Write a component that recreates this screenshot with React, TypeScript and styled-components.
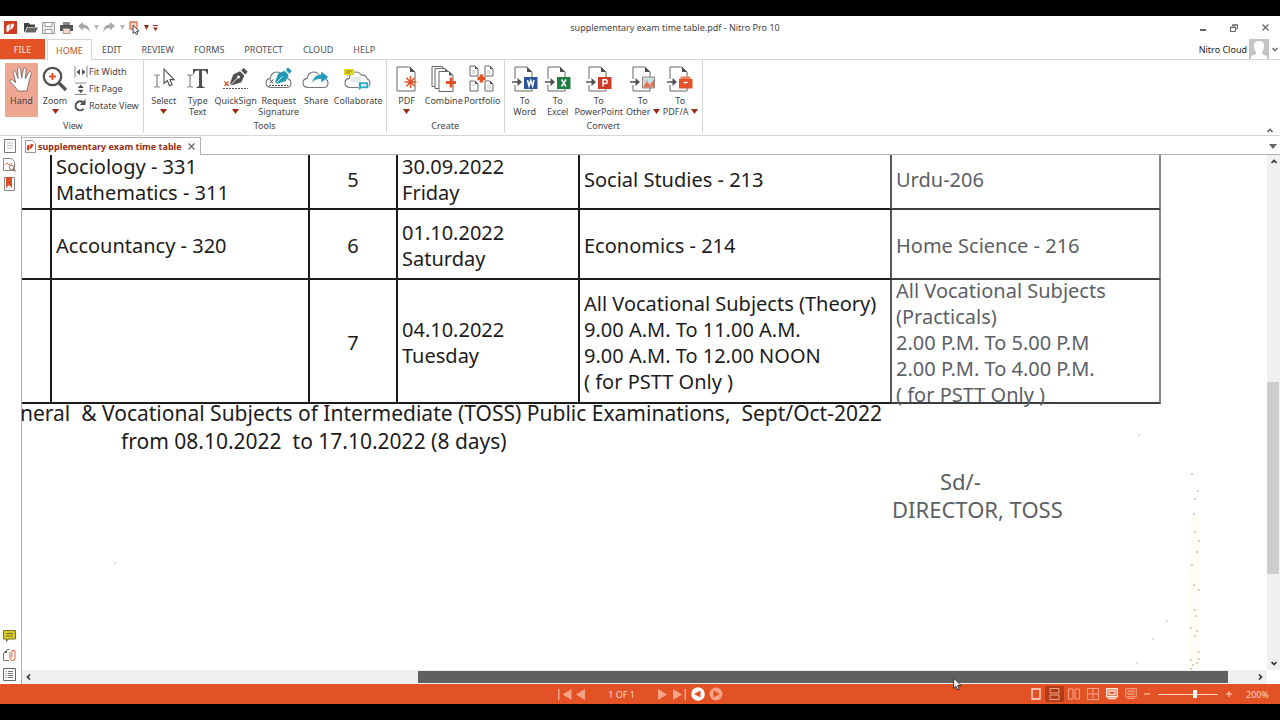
import React from "react";
import styled, { createGlobalStyle } from "styled-components";

const uiFont = '"Noto Sans", "Open Sans", sans-serif';
const orange = "#e35225";
const ink = "#505050";
const red = "#e35225";
const teal = "#1f9ab8";

const Global = createGlobalStyle`
  * { box-sizing: border-box; }
  body { margin: 0; background: #000; font-family: ${uiFont}; font-size: 9px; line-height: 11px; color: #444; }
  button, input { font: inherit; color: inherit; margin: 0; padding: 0; border: 0; background: none; }
  svg { display: block; }
`;

const Letterbox = styled.div`
  min-height: 100vh;
  display: flex;
  flex-direction: column;
  padding: 16px 0;
  background: #000;
`;

const AppWindow = styled.div`
  position: relative;
  flex: 1;
  display: flex;
  flex-direction: column;
  background: #fff;
  overflow: hidden;
`;

const TitleBar = styled.header`
  display: flex;
  align-items: center;
  height: 23px;
`;

const QuickAccess = styled.div`
  display: flex;
  align-items: center;
  width: 160px;
  padding-left: 4px;
`;

const AppLogo = styled.svg`
  flex: none;
  margin-right: 4px;
`;

const IconButton = styled.button<{ $w?: number }>`
  display: flex;
  flex: none;
  align-items: center;
  justify-content: center;
  width: ${(p) => p.$w ?? 16}px;
  height: 16px;
`;

const WindowTitle = styled.h1`
  flex: 1;
  margin: 0;
  font-size: 9px;
  font-weight: 400;
  text-align: center;
  color: #444;
`;

const WindowControls = styled.div`
  display: flex;
  justify-content: space-between;
  width: 90px;
  padding: 0 7px 0 5px;
`;

const TabRow = styled.nav`
  display: flex;
  align-items: stretch;
  height: 21px;
  border-bottom: 1px solid #d5d5d5;
`;

const FileTab = styled.button`
  width: 45px;
  background: ${orange};
  color: #ffe9df;
`;

const RibbonTab = styled.button<{ $active?: boolean }>`
  padding: 0 10px;
  color: ${(p) => (p.$active ? "#b5532d" : "#4a4f57")};
  ${(p) =>
    p.$active &&
    `margin: 0 0 -1px 2px; padding: 0 8px; background: #fff;
     border: 1px solid #d5d5d5; border-bottom: 0;`}
`;

const Account = styled.button`
  display: flex;
  align-items: center;
  gap: 2px;
  margin-left: auto;
  padding-right: 1px;
  color: #222;
`;

const Ribbon = styled.div`
  display: flex;
  height: 76px;
  border-bottom: 1px solid #d5d5d5;
`;

const Group = styled.section<{ $lead?: number }>`
  display: flex;
  flex-direction: column;
  padding: 3px 2px 1px ${(p) => p.$lead ?? 2}px;
  margin-bottom: 2px;
  border-right: 1px solid #d5d5d5;
`;

const GroupTools = styled.div`
  display: flex;
  flex: 1;
`;

const GroupName = styled.h2`
  margin: 0;
  font-size: 9px;
  font-weight: 400;
  line-height: 12px;
  text-align: center;
`;

const Tool = styled.button<{ $w: number; $active?: boolean }>`
  display: flex;
  flex-direction: column;
  align-items: center;
  width: ${(p) => p.$w}px;
  height: 54px;
  white-space: nowrap;
  background: ${(p) => (p.$active ? "#eda793" : "none")};
`;

const ToolIcon = styled.span`
  display: flex;
  align-items: center;
  height: 32px;
`;

const ToolLine = styled.span`
  display: flex;
  align-items: center;
  gap: 2px;
  min-height: 11px;
`;

const SmallTools = styled.div`
  display: flex;
  flex-direction: column;
  padding: 0 2px;
`;

const SmallTool = styled.button`
  display: flex;
  align-items: center;
  gap: 1px;
  height: 17px;
  white-space: nowrap;
`;

const Collapse = styled.button`
  align-self: flex-end;
  margin-left: auto;
  padding: 0 6px 0 0;
`;

const Body = styled.div`
  display: flex;
  flex: 1;
`;

const SideBar = styled.aside`
  display: flex;
  flex-direction: column;
  align-items: center;
  gap: 3px;
  width: 22px;
  padding: 2px 2px 2px 0;
  border-right: 1px solid #b4b4b4;
`;

const SideSpacer = styled.div`
  flex: 1;
`;

const DocArea = styled.div`
  display: flex;
  flex: 1;
  flex-direction: column;
  min-width: 0;
`;

const DocTabs = styled.div`
  display: flex;
  align-items: flex-end;
  height: 19px;
  border-bottom: 1px solid #b4b4b4;
`;

const DocTab = styled.div`
  display: flex;
  align-items: center;
  gap: 2px;
  height: 18px;
  margin-bottom: -1px;
  padding: 0 0 0 3px;
  background: #fff;
  border: 1px solid #b4b4b4;
  border-width: 1px 1px 0 0;
  color: #9b2c12;
  font-weight: 700;
`;

const TabMenu = styled.button`
  margin: 0 3px 5px auto;
`;

const Viewer = styled.div`
  display: grid;
  flex: 1;
  grid-template-columns: minmax(0, 1fr) 13px;
  grid-template-rows: minmax(0, 1fr) 14px;
`;

const Viewport = styled.main`
  position: relative;
  overflow: hidden;
  background: #fff;
  color: #1c1c1c;
  font-size: 20px;
  line-height: 26px;
`;

const TimeTable = styled.table`
  width: 1139px;
  margin-top: -8px;
  table-layout: fixed;
  border-collapse: separate;
  border-spacing: 0;
`;

const Cell = styled.td<{ $faint?: boolean; $center?: boolean; $edge: string }>`
  padding: 0 0 0 ${(p) => (p.$center ? 0 : 4)}px;
  border: solid #1c1c1c;
  border-width: 0 2px 2px 0;
  border-right-color: ${(p) => p.$edge};
  border-bottom-color: ${(p) => (p.$faint ? "#3c3e42" : "#1c1c1c")};
  color: ${(p) => (p.$faint ? "#5c5f65" : "#1c1c1c")};
  text-align: ${(p) => (p.$center ? "center" : "left")};
  vertical-align: middle;
  white-space: nowrap;
`;

const Row = styled.tr<{ $h: number }>`
  height: ${(p) => p.$h}px;
`;

const CellLines = styled.div`
  margin: -2px 0 -6px;
`;

const Note = styled.p<{ $indent?: number }>`
  margin: 0;
  padding-left: ${(p) => p.$indent ?? 0}px;
  line-height: 28px;
  white-space: pre;
`;

const Notes = styled.div`
  margin: -5px 0 0 -2px;
  font-size: 21px;
`;

const Signature = styled.div`
  margin: 12px 0 0 872px;
  color: #5c5f65;
  font-size: 22px;
`;

const Specks = styled.svg`
  position: absolute;
  left: 0;
  top: 0;
`;

const VScroll = styled.div`
  display: flex;
  flex-direction: column;
  background: #f0f0f0;
`;

const HScroll = styled.div`
  display: flex;
  background: #f0f0f0;
`;

const ScrollArrow = styled.button`
  display: flex;
  align-items: center;
  justify-content: center;
  flex: none;
  width: 14px;
  height: 14px;
`;

const Gap = styled.div<{ $grow: number }>`
  flex: ${(p) => p.$grow} 1 0;
`;

const Thumb = styled.div<{ $grow: number; $dark?: boolean }>`
  flex: ${(p) => p.$grow} 1 0;
  background: ${(p) => (p.$dark ? "#606060" : "#cdcdcd")};
  margin: ${(p) => (p.$dark ? "1px 0" : "0 1px 0 0")};
`;

const StatusBar = styled.footer`
  display: grid;
  grid-template-columns: 1fr auto 1fr;
  align-items: center;
  height: 20px;
  background: ${orange};
  color: #ffd5c6;
`;

const Pager = styled.div`
  display: flex;
  align-items: center;
  gap: 4px;
`;

const PageBox = styled.input`
  width: 64px;
  text-align: center;
`;

const ViewTools = styled.div`
  display: flex;
  align-items: center;
  justify-content: flex-end;
  padding-right: 11px;
`;

const ViewButton = styled.button<{ $active?: boolean; $w?: number }>`
  display: flex;
  align-items: center;
  justify-content: center;
  width: ${(p) => p.$w ?? 19}px;
  height: 16px;
  background: ${(p) => (p.$active ? "#b23c17" : "none")};
`;

const ZoomSlider = styled.input`
  appearance: none;
  width: 60px;
  height: 12px;
  margin: 0 8px 0 5px;
  background: linear-gradient(#ffd5c6, #ffd5c6) center / 100% 1px no-repeat;
  &::-webkit-slider-thumb {
    appearance: none;
    width: 4px;
    height: 8px;
    background: #fff;
  }
`;

const ZoomValue = styled.output`
  width: 37px;
  text-align: right;
`;

const Pointer = styled.svg`
  position: absolute;
  left: 953px;
  bottom: 13px;
  z-index: 2;
`;

const Down = ({ c = "#9b2c12", w = 7 }: { c?: string; w?: number }) => (
  <svg width={w} height="5" viewBox="0 0 8 5" preserveAspectRatio="none"><path d="M0 0h8L4 5z" fill={c} /></svg>
);

const Chevron = ({ dir, c = "#333" }: { dir: "up" | "down" | "left" | "right"; c?: string }) => {
  const d = { up: "M1.5 5L4 2.500 6.500 5", down: "M1.500 3L4 5.500 6.500 3", left: "M5 1.500L2.500 4 5 6.500", right: "M3 1.500L5.500 4 3 6.500" }[dir];
  return <svg width="8" height="8" viewBox="0 0 8 8"><path d={d} fill="none" stroke={c} strokeWidth="1.700" /></svg>;
};

const HandIcon = () => (
  <svg width="25" height="26" viewBox="0 0 25 26">
    <path d="M9 25C6.500 21 3.500 18.500 1.200 15.500C.6 14.200 2 13 3.500 14L6.800 16.800L4.200 6.500C3.900 4.500 6.200 4 6.800 6L9 12.500L8.700 3C8.700 1 11.300 .9 11.600 3L12.700 12L14.400 3.200C14.900 1.200 17.300 1.700 17.100 3.700L16.300 12.600L19.800 6.300C21 4.800 22.900 5.800 22.200 7.600L19.600 17C19 20 18.500 22.500 18 25z" fill="#fff" stroke="#7c6a66" strokeWidth=".9" strokeLinejoin="round" />
  </svg>
);

const ZoomIcon = () => (
  <svg width="26" height="26" viewBox="0 0 26 26">
    <circle cx="10.500" cy="10.500" r="8.700" fill="#fff" stroke={ink} strokeWidth="2.200" />
    <path d="M17 17l7 7" stroke={ink} strokeWidth="3.200" />
    <path d="M10.500 7v7M7 10.500h7" stroke={red} strokeWidth="2" />
  </svg>
);

const IBeam = ({ x, y }: { x: number; y: number }) => (
  <path d={`M${x} ${y}h2l1 1 1-1h2M${x + 3} ${y + 1}v10M${x} ${y + 12}h2l1-1 1 1h2`} fill="none" stroke="#888" strokeWidth="1.200" />
);

const SelectIcon = () => (
  <svg width="22" height="24" viewBox="0 0 22 24">
    <IBeam x={1} y={8} />
    <path d="M11 2v14.500l3.300-3 2.200 5.300 2.700-1.200-2.300-5h4.200z" fill="#fff" stroke={ink} strokeWidth="1.100" />
  </svg>
);

const TypeIcon = () => (
  <svg width="22" height="24" viewBox="0 0 22 24">
    <IBeam x={0} y={8} />
    <path d="M6 2h15v5h-1c-.5-2.500-1.500-3.500-3.500-3.500H15V18c0 1.500 1 2 2.500 2v1H9.500v-1c1.500 0 2.500-.5 2.500-2V3.500h-1.500C8.500 3.500 7.500 4.500 7 7H6z" fill={ink} />
  </svg>
);

const nib = "M0 15.500L3.200 6.500 10 3.300l4.300 4.300L11.400 14.200 2 17.200zM11.200 2.300L13.800 0 17.600 3.800 15.400 6.500z";

const QuickSignIcon = () => (
  <svg width="26" height="24" viewBox="0 0 26 24">
    <path d={nib} transform="translate(7 1)" fill={ink} />
    <path d="M8.500 17l6.500-6.500" stroke="#fff" strokeWidth="1" />
    <circle cx="15.500" cy="10" r="1.500" fill="#fff" />
    <path d="M1.500 14.500l4 4.500M5.500 14.500l-4 4.500" stroke={red} strokeWidth="1.300" />
    <path d="M0 21.500h25" stroke={ink} strokeWidth="1.200" strokeDasharray="2 1" />
  </svg>
);

const cloud = "M6 20.500C2.800 20.500 1 18.700 1 16c0-2.500 1.800-4.300 4.300-4.600C5.400 7.500 8.200 5 11.600 5c2.600 0 4.600 1.200 5.800 3.300 3-.5 5.200 1.200 5.700 3.700 2 .5 2.900 2.200 2.900 4.200 0 2.700-1.800 4.300-4.500 4.300z";

const RequestIcon = () => (
  <svg width="28" height="24" viewBox="0 0 28 24">
    <path d={cloud} fill="#fff" stroke="#777" strokeWidth="1.100" />
    <path d={nib} transform="translate(10 .5) scale(.95)" fill={teal} />
    <path d="M11.500 15.500l6-6" stroke="#fff" />
    <path d="M5 12.500l3 4M8 12.500l-3 4" stroke={ink} />
    <path d="M4 18.500h19" stroke={ink} strokeDasharray="2 1" />
  </svg>
);

const ShareIcon = () => (
  <svg width="28" height="24" viewBox="0 0 28 24">
    <path d={cloud} fill="#fff" stroke="#777" strokeWidth="1.100" />
    <path d="M10 16C11 10.500 14 7.500 19 7.500V4l7.500 6.200L19 16v-4c-4 0-6.500 1-9 4z" fill={teal} stroke="#fff" strokeWidth=".5" />
  </svg>
);

const CollabIcon = () => (
  <svg width="28" height="24" viewBox="0 0 28 24">
    <path d={cloud} fill="#fff" stroke="#777" strokeWidth="1.100" />
    <path d="M0 2h10v6H5l-2 2V8H0z" fill="#e8d61c" />
    <path d="M2 4h6M2 6h4" stroke="#80770a" strokeWidth=".8" />
    <path d="M7 10h10v5h-3l-2 2v-2H7z" fill="#e4e8ea" />
    <path d="M14.500 15h10v6.500h-7l-3 2z" fill="#2aa9c9" stroke="#fff" strokeWidth=".6" />
    <path d="M17 17h5.500v2.500H17z" fill="#d5f0f6" />
  </svg>
);

const Page = ({ x = 1, y = 1, w = 18, h = 24, f = 5 }: { x?: number; y?: number; w?: number; h?: number; f?: number }) => (
  <g>
    <path d={`M${x} ${y}h${w - f}l${f} ${f}v${h - f}h${-w}z`} fill="#fff" stroke="#666" strokeWidth="1" />
    <path d={`M${x + w - f} ${y}l${f} ${f}h${-f}z`} fill={ink} />
  </g>
);

const PdfIcon = () => (
  <svg width="22" height="26" viewBox="0 0 22 26">
    <Page />
    <path d="M14.500 10v12M8.500 16h12M10.300 11.800l8.400 8.400M18.700 11.800l-8.400 8.400" stroke={red} strokeWidth="1.500" />
  </svg>
);

const CombineIcon = () => (
  <svg width="26" height="26" viewBox="0 0 26 26">
    <Page x={1} y={0.5} w={14} h={20} f={4} />
    <Page x={4} y={2.5} w={14} h={20} f={4} />
    <Page x={8} y={5.5} w={14} h={20} f={4} />
    <path d="M20 11.500v10M15 16.500h10" stroke={red} strokeWidth="2.800" />
  </svg>
);

const PortfolioIcon = () => (
  <svg width="26" height="28" viewBox="0 0 26 28">
    <Page x={1} y={1} w={8} h={10} f={3} />
    <Page x={16} y={1} w={8} h={10} f={3} />
    <Page x={1} y={16} w={8} h={10} f={3} />
    <Page x={16} y={16} w={8} h={10} f={3} />
    <path d="M3 6h4M3 8h4M18 6h4M18 8h4M3 20h3M18 21h4M18 23h4" stroke="#b0b0b0" strokeWidth=".8" />
    <path d="M12.500 9.500v8M8.500 13.500h8" stroke={red} strokeWidth="3.500" />
  </svg>
);

const ConvertIcon = ({ kind }: { kind: string }) => {
  const fill: Record<string, string> = { W: "#2a5699", X: "#1f7e45", P: "#d03a27" };
  const mark: Record<string, string> = {
    W: "M15.500 14l1.500 6 1.800-5.500 1.800 5.500L22 14",
    X: "M16.500 13.500l4.500 7M21 13.500l-4.500 7",
    P: "M17 20.500v-6.700h2.500a1.800 1.800 0 0 1 0 3.800H17",
  };
  return (
    <svg width="26" height="26" viewBox="0 0 26 26">
      <Page x={3} y={1} w={17} />
      <path d="M0 13h8v6H0z" fill="#fff" />
      <path d="M0 15.200h5.500V12L10 16l-4.500 4v-3.200H0z" fill={ink} />
      {fill[kind] && (
        <>
          <path d="M12 11h13.500v12H12z" fill={fill[kind]} />
          <path d={mark[kind]} fill="none" stroke="#fff" strokeWidth="1.500" />
        </>
      )}
      {kind === "O" && (
        <>
          <path d="M12.500 11h12v11h-12z" fill="#c8e2ec" stroke="#8a6b60" strokeWidth=".8" />
          <path d="M13 21.500l4-7 3 4 4-5v8z" fill="#dd6f55" />
          <path d="M13 13l10 8" stroke="#eeb09c" />
        </>
      )}
      {kind === "A" && (
        <>
          <path d="M13.500 10.500h10v3h-10z" fill="#f0805c" />
          <path d="M12 13h13.500v9.500H12z" fill={red} />
          <path d="M16.500 16.500h4" stroke="#fff" strokeWidth="1.500" />
        </>
      )}
    </svg>
  );
};

const FitWidthIcon = () => (
  <svg width="14" height="12" viewBox="0 0 14 12">
    <path d="M1 0v11.500M13 0v11.500" stroke="#888" />
    <path d="M6 3v6L2.500 6zM8 3v6l3.500-3z" fill={ink} />
  </svg>
);
const FitPageIcon = () => (
  <svg width="14" height="14" viewBox="0 0 14 14">
    <path d="M1 1h11.500M1 12.500h11.500" stroke="#888" />
    <path d="M3.800 6h6L6.800 2.500zM3.800 7.800h6l-3 3.500z" fill={ink} />
  </svg>
);
const RotateIcon = () => (
  <svg width="14" height="13" viewBox="0 0 14 13">
    <path d="M9.500 9.800A4.500 4.500 0 1 1 8.800 3.200" fill="none" stroke={ink} strokeWidth="2" />
    <path d="M11.500 0v6H5.800z" fill={ink} />
  </svg>
);

const NitroMark = ({ x, y, s, c }: { x: number; y: number; s: number; c: string }) => (
  <g transform={`translate(${x} ${y}) scale(${s})`} fill={c}>
    <path d="M0 2.500L3 1v5.500L1.500 8.500 0 8z" />
    <path d="M4 1.500C5.500 0 7 0 7 2c0 2-1.500 4-3.500 4.500z" />
  </g>
);

type ToolDef = { label: string; sub?: string; w: number; icon: React.ReactNode; drop?: boolean; active?: boolean };

const tools: ToolDef[] = [
  { label: "Select", w: 36, icon: <SelectIcon />, drop: true },
  { label: "Type", sub: "Text", w: 32, icon: <TypeIcon /> },
  { label: "QuickSign", w: 44, icon: <QuickSignIcon />, drop: true },
  { label: "Request", sub: "Signature", w: 42, icon: <RequestIcon /> },
  { label: "Share", w: 33, icon: <ShareIcon /> },
  { label: "Collaborate", w: 51, icon: <CollabIcon /> },
];
const creators: ToolDef[] = [
  { label: "PDF", w: 36, icon: <PdfIcon />, drop: true },
  { label: "Combine", w: 38, icon: <CombineIcon /> },
  { label: "Portfolio", w: 39, icon: <PortfolioIcon /> },
];
const converters: ToolDef[] = [
  { label: "To", sub: "Word", w: 36, icon: <ConvertIcon kind="W" /> },
  { label: "To", sub: "Excel", w: 30, icon: <ConvertIcon kind="X" /> },
  { label: "To", sub: "PowerPoint", w: 52, icon: <ConvertIcon kind="P" /> },
  { label: "To", sub: "Other", w: 36, icon: <ConvertIcon kind="O" />, drop: true },
  { label: "To", sub: "PDF/A", w: 39, icon: <ConvertIcon kind="A" />, drop: true },
];

const BigTool = ({ t }: { t: ToolDef }) => (
  <Tool $w={t.w} $active={t.active}>
    <ToolIcon>{t.icon}</ToolIcon>
    <ToolLine>{t.label}</ToolLine>
    <ToolLine>
      {t.sub}
      {t.drop && <Down />}
    </ToolLine>
  </Tool>
);

const RibbonGroup = ({ name, items, lead, children }: { name: string; items: ToolDef[]; lead?: number; children?: React.ReactNode }) => (
  <Group $lead={lead}>
    <GroupTools>
      {items.map((t, i) => <BigTool key={i} t={t} />)}
      {children}
    </GroupTools>
    <GroupName>{name}</GroupName>
  </Group>
);

const edges = ["#1c1c1c", "#1c1c1c", "#1c1c1c", "#1c1c1c", "#55585c", "#85888e"];

const rows: { h: number; cells: string[][] }[] = [
  { h: 63, cells: [[""], ["Sociology - 331", "Mathematics - 311"], ["5"], ["30.09.2022", "Friday"], ["Social Studies - 213"], ["Urdu-206"]] },
  { h: 70, cells: [[""], ["Accountancy - 320"], ["6"], ["01.10.2022", "Saturday"], ["Economics - 214"], ["Home Science - 216"]] },
  {
    h: 124,
    cells: [[""], [""], ["7"], ["04.10.2022", "Tuesday"],
      ["All Vocational Subjects (Theory)", "9.00 A.M. To 11.00 A.M.", "9.00 A.M. To 12.00 NOON", "( for PSTT Only )"],
      ["All Vocational Subjects", "(Practicals)", "2.00 P.M. To 5.00 P.M", "2.00 P.M. To 4.00 P.M.", "( for PSTT Only )"]],
  },
];

const specks = [[1192, 474], [1198, 491], [1195, 499], [1194, 514], [1195, 532], [1199, 541], [1197, 552], [1192, 565], [1194, 585], [1199, 590], [1195, 610], [1196, 616], [1191, 628], [1197, 631], [1195, 636], [1199, 652], [1191, 660], [1197, 663], [1193, 665], [1199, 659], [1191, 669], [1167, 621], [1153, 639], [1139, 435], [1137, 663], [115, 563]];

const quick = [
  { label: "Open", w: 19, icon: <svg width="14" height="11" viewBox="0 0 14 11"><path d="M0 1h5l1 1.500h5V5H3L.5 10H0z" fill="#444" /><path d="M3.500 5.500H14L11.500 10.500H1z" fill="#666" /></svg> },
  { label: "Save", w: 17, icon: <svg width="13" height="12" viewBox="0 0 13 12"><path d="M.5.500h12v11H.5z" fill="#eee" stroke="#999" /><path d="M3 .5h7v4H3zM3 7.500h7v4H3z" fill="#fff" stroke="#999" /></svg> },
  { label: "Print", w: 18, icon: <svg width="13" height="12" viewBox="0 0 13 12"><path d="M3 0h7v3H3z" fill="#888" /><path d="M0 3h13v6H0z" fill="#555" /><path d="M3 6.500h7v5H3z" fill="#f6d9cf" stroke="#888" strokeWidth=".8" /></svg> },
  { label: "Undo", w: 18, icon: <svg width="12" height="11" viewBox="0 0 12 11"><path d="M0 4l5-4v2.500c4 0 6.500 2 6.500 7.500C10 7 8.500 6 5 6v2.500z" fill="#a8a8a8" /></svg> },
  { label: "Undo history", w: 6, icon: <Down c="#bbb" w={5} /> },
  { label: "Redo", w: 20, icon: <svg width="12" height="11" viewBox="0 0 12 11"><path d="M12 4L7 0v2.500C3 2.500.5 4.500.5 10 2 7 3.500 6 7 6v2.500z" fill="#a8a8a8" /></svg> },
  { label: "Redo history", w: 6, icon: <Down c="#bbb" w={5} /> },
  { label: "Select", w: 19, icon: <svg width="11" height="14" viewBox="0 0 11 14"><path d="M1 1h7v7H1z" fill="#f8d5c8" stroke="#dc7355" strokeWidth="1.300" /><path d="M4 4v8.500l2-1.700 1.300 2.700 1.500-.8-1.200-2.500H10z" fill="#fff" stroke="#444" /></svg> },
  { label: "Select options", w: 5, icon: <Down w={5} /> },
  { label: "Customize", w: 12, icon: <svg width="5" height="6" viewBox="0 0 5 6"><path d="M0 .5h5" stroke="#9b2c12" /><path d="M0 2.500h5L2.500 6z" fill="#9b2c12" /></svg> },
];

const pale = "#f5a489";
const arrowL = "M9 0v11L0 5.500z";
const arrowR = "M0 0v11l9-5.500z";

export default function App() {
  return (
    <Letterbox>
      <Global />
      <AppWindow>
        <TitleBar>
          <QuickAccess>
            <AppLogo width="13" height="13" viewBox="0 0 13 13"><path d="M0 0h13v13H0z" fill="#cf3a22" /><NitroMark x={2.5} y={2} s={1.05} c="#fff" /></AppLogo>
            {quick.map((q) => <IconButton key={q.label} $w={q.w} aria-label={q.label}>{q.icon}</IconButton>)}
          </QuickAccess>
          <WindowTitle>supplementary exam time table.pdf - Nitro Pro 10</WindowTitle>
          <WindowControls>
            <IconButton aria-label="Minimize"><svg width="6" height="8"><path d="M0 5h6v2H0z" fill="#666" /></svg></IconButton>
            <IconButton aria-label="Restore"><svg width="8" height="8" viewBox="0 0 8 8" fill="none" stroke="#666"><path d="M2.500 2V.8h5v4H6M2.500 1.200h5" /><path d="M.5 3h5v4.500h-5zM.5 3.500h5" /></svg></IconButton>
            <IconButton aria-label="Close"><svg width="7" height="7" viewBox="0 0 7 7"><path d="M.5.500l6 6M6.500.500l-6 6" stroke="#666" strokeWidth="1.200" /></svg></IconButton>
          </WindowControls>
        </TitleBar>

        <TabRow>
          <FileTab>FILE</FileTab>
          <RibbonTab $active>HOME</RibbonTab>
          {["EDIT", "REVIEW", "FORMS", "PROTECT", "CLOUD", "HELP"].map((t) => <RibbonTab key={t}>{t}</RibbonTab>)}
          <Account>
            Nitro Cloud
            <svg width="20" height="20" viewBox="0 0 20 20"><path d="M0 0h20v20H0z" fill="#c4c4c4" /><path d="M10 2c4 0 5.500 2.500 5 6-.3 2.500-1.200 4-2 5v2l5 2v3H2v-3l5-2v-2C6 12 5.300 10.500 5 8 4.500 4.500 6 2 10 2z" fill="#fff" /></svg>
            <Chevron dir="down" c="#777" />
          </Account>
        </TabRow>

        <Ribbon>
          <RibbonGroup
            name="View"
            lead={5}
            items={[
              { label: "Hand", w: 33, icon: <HandIcon />, active: true },
              { label: "Zoom", w: 34, icon: <ZoomIcon />, drop: true },
            ]}
          >
            <SmallTools>
              <SmallTool><FitWidthIcon />Fit Width</SmallTool>
              <SmallTool><FitPageIcon />Fit Page</SmallTool>
              <SmallTool><RotateIcon />Rotate View</SmallTool>
            </SmallTools>
          </RibbonGroup>
          <RibbonGroup name="Tools" items={tools} />
          <RibbonGroup name="Create" items={creators} />
          <RibbonGroup name="Convert" items={converters} />
          <Collapse aria-label="Collapse ribbon"><Chevron dir="up" c="#666" /></Collapse>
        </Ribbon>

        <Body>
          <SideBar>
            <IconButton aria-label="Pages"><svg width="12" height="14" viewBox="0 0 12 14"><path d="M.5.500h11v13H.5z" fill="#fff" stroke="#777" /><path d="M3 4h6M3 6.500h6M3 9h6" stroke="#aaa" strokeWidth=".8" /></svg></IconButton>
            <IconButton aria-label="Signatures"><svg width="13" height="14" viewBox="0 0 13 14"><path d="M.5.500h8l3 3v9H.5z" fill="#fff" stroke="#888" /><path d="M2 7l2-2 2 2 3-2" stroke="#dc7355" fill="none" /><circle cx="8.500" cy="9.500" r="2.200" fill="#fff" stroke="#a66" /><path d="M10 11l2.500 2.500" stroke="#a66" strokeWidth="1.300" /></svg></IconButton>
            <IconButton aria-label="Bookmarks"><svg width="11" height="14" viewBox="0 0 11 14"><path d="M.5.500h10v13H.5z" fill="#fff" stroke="#888" /><path d="M2 0h6v11L5 8l-3 3z" fill="#d8502a" /></svg></IconButton>
            <SideSpacer />
            <IconButton aria-label="Comments"><svg width="13" height="12" viewBox="0 0 13 12"><path d="M.5.500h12v8.500H5L3.500 11.500V9h-3z" fill="#dccb22" stroke="#77702a" /><path d="M3 3.500h7M3 6h7" stroke="#77702a" /></svg></IconButton>
            <IconButton aria-label="Attachments"><svg width="13" height="12" viewBox="0 0 13 12"><path d="M4 .5h2.500M.5 4v7.500H6" fill="none" stroke="#777" /><path d="M.5 4L4 .5V4z" fill="#555" /><path d="M7 3v6a2.300 2.300 0 0 0 5 0V2.500a1.700 1.700 0 0 0-3.200 0V8.500" fill="none" stroke="#dc7355" strokeWidth="1.100" /></svg></IconButton>
            <IconButton aria-label="Output"><svg width="13" height="13" viewBox="0 0 13 13"><path d="M.5.500h12v12H.5z" fill="#fff" stroke="#666" /><path d="M5 3.500h5M5 5.500h5M5 7.500h5M5 9.500h5M2.500 3.500h1M2.500 5.500h1M2.500 7.500h1M2.500 9.500h1" stroke="#777" /></svg></IconButton>
          </SideBar>
          <DocArea>
            <DocTabs>
              <DocTab>
                <svg width="11" height="13" viewBox="0 0 11 13"><path d="M.5.500h7L10.500 3.500v9H.5z" fill="#fff" stroke="#999" /><NitroMark x={2} y={3.5} s={0.85} c="#d23b1d" /></svg>
                <span>supplementary exam time table</span>
                <IconButton aria-label="Close tab"><svg width="7" height="7" viewBox="0 0 7 7"><path d="M.5.500l6 6M6.500.500l-6 6" stroke="#666" strokeWidth="1.200" /></svg></IconButton>
              </DocTab>
              <TabMenu aria-label="Open documents"><Down c="#666" w={8} /></TabMenu>
            </DocTabs>
            <Viewer>
              <Viewport>
                <TimeTable>
                  <colgroup>
                    <col width="30" /><col width="258" /><col width="88" /><col width="182" /><col width="312" /><col width="269" />
                  </colgroup>
                  <tbody>
                    {rows.map((r, i) => (
                      <Row key={i} $h={r.h}>
                        {r.cells.map((lines, j) => (
                          <Cell key={j} $faint={j === 5} $center={j === 2} $edge={edges[j]}>
                            <CellLines>{lines.map((l) => <div key={l}>{l}</div>)}</CellLines>
                          </Cell>
                        ))}
                      </Row>
                    ))}
                  </tbody>
                </TimeTable>
                <Notes>
                  <Note>{"neral  & Vocational Subjects of Intermediate (TOSS) Public Examinations,  Sept/Oct-2022"}</Note>
                  <Note $indent={101}>{"from 08.10.2022  to 17.10.2022 (8 days)"}</Note>
                  <Signature>
                    <Note $indent={48}>Sd/-</Note>
                    <Note>DIRECTOR, TOSS</Note>
                  </Signature>
                </Notes>
                <Specks width="1245" height="515" viewBox="22 155 1245 515" aria-hidden="true">
                  <path d="M1191 515h8v155h-12v-50z" fill="#fffdf5" />
                  {specks.map(([x, y], i) => <circle key={i} cx={x} cy={y} r=".8" fill={x > 1180 ? "#a39c80" : "#bbb"} />)}
                </Specks>
              </Viewport>
              <VScroll>
                <ScrollArrow aria-label="Scroll up"><Chevron dir="up" /></ScrollArrow>
                <Gap $grow={213} />
                <Thumb $grow={192} />
                <Gap $grow={82} />
                <ScrollArrow aria-label="Scroll down"><Chevron dir="down" /></ScrollArrow>
              </VScroll>
              <HScroll>
                <ScrollArrow aria-label="Scroll left"><Chevron dir="left" /></ScrollArrow>
                <Gap $grow={382} />
                <Thumb $grow={810} $dark />
                <Gap $grow={25} />
                <ScrollArrow aria-label="Scroll right"><Chevron dir="right" /></ScrollArrow>
              </HScroll>
            </Viewer>
          </DocArea>
        </Body>

        <StatusBar>
          <span />
          <Pager>
            <button aria-label="First page"><svg width="14" height="11"><path d="M0 0h1.500v11H0z" fill={pale} /><path d={arrowL} transform="translate(4.500)" fill={pale} /></svg></button>
            <button aria-label="Previous page"><svg width="10" height="11"><path d={arrowL} fill={pale} /></svg></button>
            <PageBox aria-label="Page" defaultValue="1 OF 1" />
            <button aria-label="Next page"><svg width="10" height="11"><path d={arrowR} fill={pale} /></svg></button>
            <button aria-label="Last page"><svg width="15" height="11"><path d={arrowR} transform="translate(1)" fill={pale} /><path d="M12.500 0H14v11h-1.500z" fill={pale} /></svg></button>
            <button aria-label="Previous view"><svg width="14" height="14"><circle cx="7" cy="7" r="6.800" fill="#fff" /><path d="M9.500 3.500v7L3 7z" fill={orange} /></svg></button>
            <button aria-label="Next view"><svg width="14" height="14"><circle cx="7" cy="7" r="6.500" fill={pale} /><path d="M4.500 3.500v7L11 7z" fill={orange} /></svg></button>
          </Pager>
          <ViewTools>
            <ViewButton aria-label="Single page"><svg width="10" height="12"><path d="M1 1h8v10H1z" fill="none" stroke="#ffe5da" strokeWidth="1.300" /></svg></ViewButton>
            <ViewButton $active aria-label="Continuous"><svg width="11" height="12"><path d="M1 .5h9v4.500H1zM1 7h9v4.500H1z" fill="none" stroke={pale} /></svg></ViewButton>
            <ViewButton aria-label="Facing"><svg width="12" height="12"><path d="M.5 1h4.500v10H.5zM7 1h4.500v10H7z" fill="none" stroke={pale} /></svg></ViewButton>
            <ViewButton aria-label="Continuous facing"><svg width="12" height="12"><path d="M.5.500h11v11H.5zM6 .5v11M.5 6h11" fill="none" stroke={pale} /></svg></ViewButton>
            <ViewButton aria-label="Full screen"><svg width="12" height="12"><path d="M.7.700h10.600v8H.7z" fill="none" stroke="#ffe5da" strokeWidth="1.400" /><path d="M3 3h6v3.500H3zM2 10.500h8" fill="none" stroke="#ffe5da" strokeWidth="1.300" /></svg></ViewButton>
            <ViewButton aria-label="Full screen facing"><svg width="12" height="12"><path d="M.7.700h10.600v8H.7zM3 3h6v3.500H3zM6 3v4M2 10.500h8" fill="none" stroke={pale} /></svg></ViewButton>
            <ViewButton $w={13} aria-label="Zoom out"><svg width="6" height="6"><path d="M0 3h6" stroke="#ffd5c6" /></svg></ViewButton>
            <ZoomSlider type="range" aria-label="Zoom" min={0} max={100} defaultValue={62} />
            <button aria-label="Zoom in"><svg width="6" height="6"><path d="M0 3h6M3 0v6" stroke="#ffd5c6" /></svg></button>
            <ZoomValue>200%</ZoomValue>
          </ViewTools>
        </StatusBar>
        <Pointer width="9" height="14" viewBox="0 0 9 14"><path d="M.7 1v10.500L3 9.300l1.700 3.700 1.600-.7L4.700 8.600H8z" fill="#fff" stroke="#222" strokeWidth=".9" /></Pointer>
      </AppWindow>
    </Letterbox>
  );
}
